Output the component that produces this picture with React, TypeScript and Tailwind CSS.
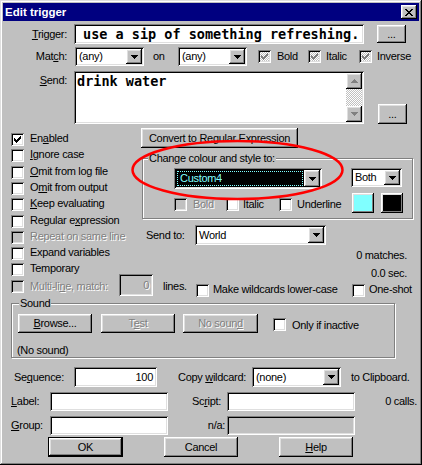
import React from 'react';

const raised =
  'shadow-[inset_-1px_-1px_0_#000,inset_1px_1px_0_#fff,inset_-2px_-2px_0_#808080,inset_2px_2px_0_#dfdfdf]';
const sunken =
  'shadow-[inset_1px_1px_0_#808080,inset_-1px_-1px_0_#fff,inset_2px_2px_0_#000,inset_-2px_-2px_0_#dfdfdf]';
const etched = 'border border-[#808080] shadow-[1px_1px_0_#fff,inset_1px_1px_0_#fff]';
const grayText = 'text-[#808080] [text-shadow:1px_1px_0_#fff]';
const mono = "font-['DejaVu_Sans_Mono',monospace] font-bold text-[13.5px] tracking-normal";

// pixel rows [x, y, w]
const CHECK_PX: [number, number, number][] = [
  [6, 0, 1], [5, 1, 2], [0, 2, 1], [4, 2, 3], [0, 3, 2], [3, 3, 3], [0, 4, 5], [1, 5, 3], [2, 6, 1],
];
const CLOSE_PX: [number, number, number][] = [
  [0, 0, 2], [6, 0, 2], [1, 1, 2], [5, 1, 2], [2, 2, 4], [3, 3, 2], [2, 4, 4], [1, 5, 2], [5, 5, 2], [0, 6, 2], [6, 6, 2],
];

function Pixels({ px, w, h, color }: { px: [number, number, number][]; w: number; h: number; color: string }) {
  return (
    <svg width={w} height={h} shapeRendering="crispEdges">
      {px.map(([x, y, width], i) => (
        <rect key={i} x={x} y={y} width={width} height={1} fill={color} />
      ))}
    </svg>
  );
}

function Arrow({ up, color = '#000' }: { up?: boolean; color?: string }) {
  const rows: [number, number, number][] = up
    ? [[3, 0, 1], [2, 1, 3], [1, 2, 5], [0, 3, 7]]
    : [[0, 0, 7], [1, 1, 5], [2, 2, 3], [3, 3, 1]];
  return <Pixels px={rows} w={7} h={4} color={color} />;
}

function Check({ on, kind = 'normal', className = '' }: { on?: boolean; kind?: 'normal' | 'disabled' | 'grayed'; className?: string }) {
  const fill =
    kind === 'normal'
      ? 'bg-white'
      : kind === 'disabled'
        ? 'bg-[#c0c0c0]'
        : 'bg-[repeating-conic-gradient(#fff_0_25%,#c0c0c0_0_50%)] bg-[length:2px_2px]';
  return (
    <div className={`w-[13px] h-[13px] shrink-0 flex items-center justify-center ${sunken} ${fill} ${className}`}>
      {on && <Pixels px={CHECK_PX} w={7} h={7} color={kind === 'normal' ? '#000' : '#808080'} />}
    </div>
  );
}

function DropBtn() {
  return (
    <div className={`w-[16px] h-full shrink-0 bg-[#c0c0c0] flex items-center justify-center ${raised}`}>
      <Arrow />
    </div>
  );
}

function Combo({ value, className = '' }: { value: string; className?: string }) {
  return (
    <div className={`flex p-[2px] bg-white ${sunken} ${className}`}>
      <div className="flex-1 flex items-center pl-[2px] whitespace-nowrap overflow-hidden">{value}</div>
      <DropBtn />
    </div>
  );
}

function Btn({ children, className = '', disabled }: { children: React.ReactNode; className?: string; disabled?: boolean }) {
  return (
    <div className={`flex items-center justify-center bg-[#c0c0c0] whitespace-nowrap ${raised} ${disabled ? grayText : ''} ${className}`}>
      {children}
    </div>
  );
}

function CheckRow({ label, on, kind = 'normal', className = '' }: { label: React.ReactNode; on?: boolean; kind?: 'normal' | 'disabled'; className?: string }) {
  return (
    <div className={`flex items-start pl-[11px] ${className}`}>
      <Check on={on} kind={kind} className="mt-[1px]" />
      <span className={`ml-[6px] leading-[12px] whitespace-nowrap ${kind === 'disabled' ? grayText : ''}`}>{label}</span>
    </div>
  );
}

export default function App() {
  return (
    <div className="relative w-[422px] h-[465px] overflow-hidden bg-[#c0c0c0] text-black text-[11px] leading-[13px] tracking-[-0.3px] font-['Liberation_Sans',Arial,sans-serif] shadow-[inset_-1px_-1px_0_#000,inset_1px_1px_0_#dfdfdf,inset_-2px_-2px_0_#808080,inset_2px_2px_0_#fff]">
      {/* title bar */}
      <div className="mx-[3px] mt-[3px] h-[18px] bg-[#000080] flex items-center pl-[2px] pr-[2px]">
        <span className="text-white font-bold text-[11.5px] tracking-normal">Edit trigger</span>
        <div className={`ml-auto w-[16px] h-[14px] bg-[#c0c0c0] flex items-center justify-center ${raised}`}>
          <Pixels px={CLOSE_PX} w={8} h={7} color="#000" />
        </div>
      </div>

      {/* trigger */}
      <div className="flex mt-[3px] h-[20px]">
        <span className="w-[67px] text-right self-center"><u>T</u>rigger:</span>
        <div className={`ml-[7px] w-[290px] h-full bg-white flex items-center pl-[9px] ${sunken}`}>
          <span className={mono}>use a sip of something refreshing.</span>
        </div>
        <Btn className="ml-[13px] w-[29px] h-[18px] mt-[1px]">...</Btn>
      </div>

      {/* match */}
      <div className="flex items-center mt-[3px] h-[19px]">
        <span className="w-[67px] text-right">Mat<u>c</u>h:</span>
        <Combo value="(any)" className="ml-[8px] w-[69px] h-full" />
        <span className="ml-[9px] w-[25px]">on</span>
        <Combo value="(any)" className="w-[69px] h-full" />
        <Check on kind="grayed" className="ml-[11px]" />
        <span className="ml-[6px] w-[31px]">Bold</span>
        <Check on kind="grayed" />
        <span className="ml-[5px] w-[33px]">Italic</span>
        <Check on kind="grayed" />
        <span className="ml-[5px]">Inverse</span>
      </div>

      {/* send */}
      <div className="flex mt-[5px] h-[53px]">
        <span className="w-[67px] text-right mt-[3px]"><u>S</u>end:</span>
        <div className={`ml-[7px] w-[290px] h-full bg-white flex p-[2px] ${sunken}`}>
          <div className={`flex-1 pl-[1px] leading-[16px] ${mono}`}>drink water</div>
          <div className="w-[16px] flex flex-col">
            <div className={`h-[16px] bg-[#c0c0c0] flex items-center justify-center ${raised}`}>
              <Arrow up color="#808080" />
            </div>
            <div className="flex-1 bg-[repeating-conic-gradient(#fff_0_25%,#c0c0c0_0_50%)] bg-[length:2px_2px]" />
            <div className={`h-[16px] bg-[#c0c0c0] flex items-center justify-center ${raised}`}>
              <Arrow color="#808080" />
            </div>
          </div>
        </div>
        <Btn className="ml-[14px] w-[29px] h-[20px] self-end">...</Btn>
      </div>

      {/* middle section */}
      <div className="flex mt-[4px]">
        <div className="w-[141px] pt-[4px] flex flex-col">
          <CheckRow className="h-[16px]" on label={<>En<u>a</u>bled</>} />
          <CheckRow className="h-[17px]" label={<><u>I</u>gnore case</>} />
          <CheckRow className="h-[16px]" label={<><u>O</u>mit from log file</>} />
          <CheckRow className="h-[16px]" label={<>O<u>m</u>it from output</>} />
          <CheckRow className="h-[17px]" label={<><u>K</u>eep evaluating</>} />
          <CheckRow className="h-[16px]" label={<>Regular e<u>x</u>pression</>} />
          <CheckRow className="h-[16px]" kind="disabled" label={<>Repeat on same line</>} />
        </div>
        <div className="flex flex-col">
          <Btn className="w-[157px] h-[20px]">Convert to Regular Expression</Btn>
          <div className={`mt-[10px] ml-[1px] w-[271px] h-[61px] flex flex-col ${etched}`}>
            <span className="-mt-[7px] ml-[5px] px-[1px] w-fit bg-[#c0c0c0] whitespace-nowrap">Change colour and style to:</span>
            <div className="flex mt-[3px]">
              <div className={`ml-[31px] w-[148px] h-[21px] flex p-[2px] bg-white ${sunken}`}>
                <div className="flex-1 bg-black p-[1px]">
                  <div className="h-full border border-dotted border-[#80ffff] flex items-center pl-[2px] text-[#80ffff]">Custom4</div>
                </div>
                <DropBtn />
              </div>
              <Combo value="Both" className="ml-[29px] w-[51px] h-[19px]" />
            </div>
            <div className="flex items-start mt-[4px]">
              <Check kind="disabled" className="ml-[31px] mt-[5px]" />
              <span className={`ml-[6px] w-[33px] mt-[5px] leading-[12px] ${grayText}`}>Bold</span>
              <Check className="mt-[5px]" />
              <span className="ml-[4px] w-[36px] mt-[5px] leading-[12px]">Italic</span>
              <Check className="mt-[5px]" />
              <span className="ml-[5px] w-[55px] mt-[5px] leading-[12px]">Underline</span>
              <div className={`w-[22px] h-[20px] bg-[#80ffff] ${raised}`} />
              <div className={`ml-[7px] w-[22px] h-[20px] bg-black ${raised}`} />
            </div>
          </div>
          <div className="flex items-center mt-[6px] h-[20px]">
            <span className="ml-[5px] w-[49px]">Send to:</span>
            <Combo value="World" className="w-[131px] h-full" />
          </div>
        </div>
      </div>

      <div className="flex h-[16px]">
        <CheckRow className="h-[16px]" label="Expand variables" />
        <span className="ml-auto mr-[15px] mt-[3px] leading-[12px]">0 matches.</span>
      </div>
      <div className="flex h-[16px]">
        <CheckRow className="h-[16px]" label="Temporary" />
        <span className="ml-auto mr-[15px] mt-[5px] leading-[12px]">0.0 sec.</span>
      </div>

      {/* multi-line row */}
      <div className="flex items-start h-[23px] -mt-[4px]">
        <Check kind="disabled" className="ml-[11px] mt-[6px]" />
        <span className={`ml-[6px] w-[89px] mt-[6px] leading-[12px] whitespace-nowrap ${grayText}`}>Multi-li<u>n</u>e, match:</span>
        <div className={`w-[34px] h-[22px] bg-[#c0c0c0] flex items-center justify-end pr-[4px] ${sunken} ${grayText}`}>0</div>
        <span className="ml-[10px] w-[33px] mt-[6px] leading-[12px]">lines.</span>
        <Check className="mt-[10px]" />
        <span className="ml-[4px] w-[139px] mt-[9px] leading-[12px] whitespace-nowrap">Make wildcards lower-case</span>
        <Check className="mt-[10px]" />
        <span className="ml-[4px] mt-[9px] leading-[12px]">One-shot</span>
      </div>

      {/* sound group */}
      <div className={`mt-[6px] ml-[11px] w-[384px] h-[55px] flex flex-col ${etched}`}>
        <span className="-mt-[7px] ml-[7px] px-[1px] w-fit bg-[#c0c0c0]">Sound</span>
        <div className="flex items-start mt-[4px] h-[19px]">
          <Btn className="ml-[6px] w-[74px] h-full"><span><u>B</u>rowse...</span></Btn>
          <Btn disabled className="ml-[9px] w-[74px] h-full"><span>T<u>e</u>st</span></Btn>
          <Btn disabled className="ml-[8px] w-[75px] h-full"><span>No soun<u>d</u></span></Btn>
          <Check className="ml-[15px] mt-[4px]" />
          <span className="ml-[6px] mt-[5px] leading-[12px]">Only if inactive</span>
        </div>
        <span className="ml-[5px] mt-[11px] leading-[12px]">(No sound)</span>
      </div>

      {/* sequence */}
      <div className="flex items-center mt-[9px] h-[20px]">
        <span className="ml-[14px] w-[60px]">Se<u>q</u>uence:</span>
        <div className={`w-[83px] h-full bg-white flex items-center justify-end pr-[4px] ${sunken}`}>100</div>
        <span className="ml-[21px] w-[74px] whitespace-nowrap">Copy <u>w</u>ildcard:</span>
        <Combo value="(none)" className="w-[89px] h-full" />
        <span className="ml-[10px] whitespace-nowrap">to Clipboard.</span>
      </div>

      <div className="flex items-center mt-[5px] h-[19px]">
        <span className="ml-[11px] w-[39px]"><u>L</u>abel:</span>
        <div className={`w-[118px] h-full bg-white ${sunken}`} />
        <span className="w-[59px] text-right pr-[6px]">Sc<u>r</u>ipt:</span>
        <div className={`w-[128px] h-full bg-white ${sunken}`} />
        <span className="flex-1 text-right pr-[5px]">0 calls.</span>
      </div>

      <div className="flex items-center mt-[5px] h-[19px]">
        <span className="ml-[11px] w-[39px]"><u>G</u>roup:</span>
        <div className={`w-[118px] h-full bg-white ${sunken}`} />
        <span className="w-[59px] text-right pr-[2px]">n/a:</span>
        <div className={`w-[128px] h-full bg-[#c0c0c0] ${sunken}`} />
      </div>

      {/* buttons */}
      <div className="flex mt-[2px] h-[20px]">
        <Btn className="ml-[48px] w-[75px] h-full border border-black">OK</Btn>
        <Btn className="ml-[41px] w-[74px] h-full">Cancel</Btn>
        <Btn className="ml-[41px] w-[74px] h-full"><span><u>H</u>elp</span></Btn>
      </div>

      {/* red annotation */}
      <svg className="absolute inset-0 pointer-events-none" width="422" height="465">
        <ellipse cx="237.5" cy="170" rx="105" ry="29" fill="none" stroke="#ff0000" strokeWidth="2.5" />
      </svg>
    </div>
  );
}
